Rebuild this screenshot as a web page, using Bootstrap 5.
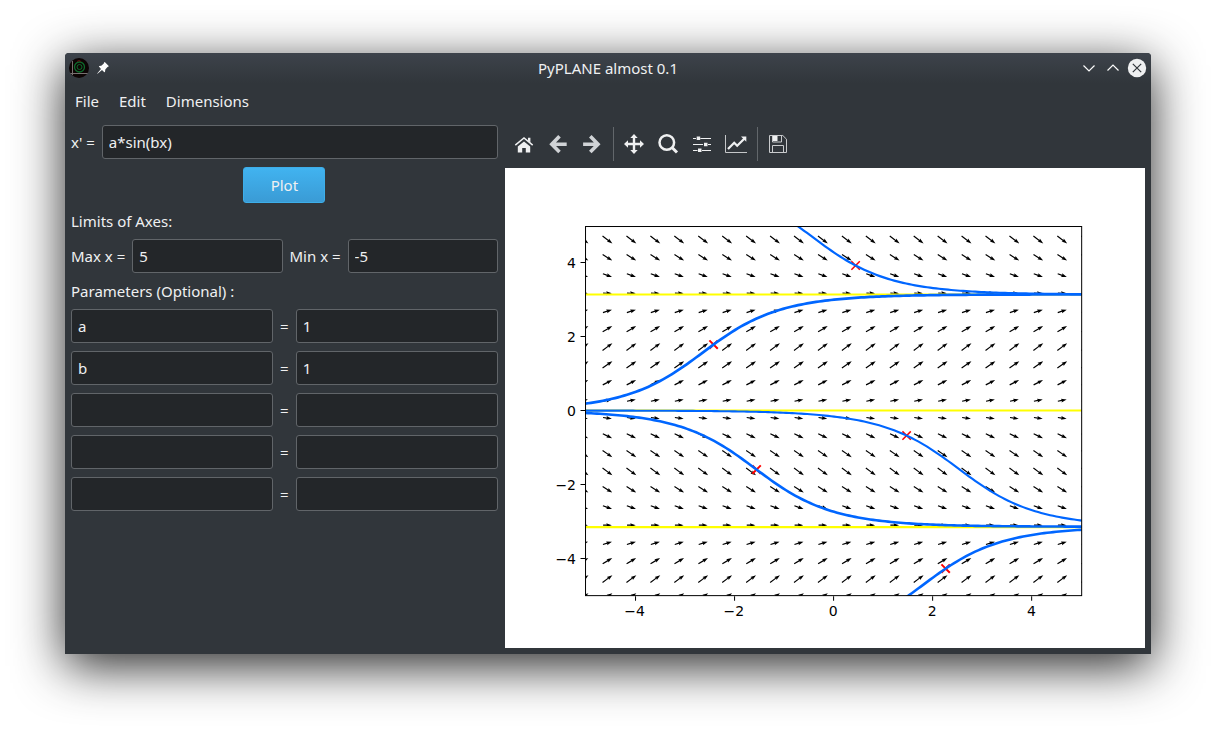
<!DOCTYPE html>
<html lang="en">
<head>
<meta charset="utf-8">
<meta name="viewport" content="width=device-width, initial-scale=1">
<title>PyPLANE almost 0.1</title>
<link rel="stylesheet" href="https://cdn.jsdelivr.net/npm/bootstrap@5.3.0/dist/css/bootstrap.min.css">
<style>
  :root { --win: #31363b; --field: #232629; --edge: #616569; --ink: #eff0f1; }
  body { background: #fff; color: var(--ink); font: 15px/20px "Noto Sans", sans-serif; }
  .desktop { padding: 53px 65px 77px; }
  .app-window { background: var(--win); border-radius: 4px 4px 0 0; box-shadow: 0 12px 50px rgba(0,0,0,.85); }
  .title-bar { display: grid; grid-template-columns: 1fr auto 1fr; align-items: center; height: 30px; padding: 0 4px;
    background: linear-gradient(#3d434b, var(--win)); border-radius: 4px 4px 0 0; }
  .title-bar h1 { font-size: 15px; line-height: 20px; font-weight: 400; }
  .plain-btn { border: 0; padding: 0; background: none; color: inherit; display: flex; align-items: center; justify-content: center; }
  .win-btn { width: 20px; height: 20px; }
  .menu-bar { height: 36px; }
  .menu-bar a { color: inherit; text-decoration: none; padding: 0 10px; }
  .panes { display: grid; grid-template-columns: 2fr 3fr; gap: 7px; padding: 6px; }
  .panes .form-control { height: 34px; padding: 0 6px; border-radius: 3px; min-width: 0; flex: 1 1 0;
    background: var(--field); border-color: var(--edge); color: var(--ink); font-size: 15px; line-height: 20px; }
  .tight { gap: 8px 7px; }
  .section-label { height: 20px; }
  .plot-btn { width: 82px; height: 36px; padding: 0; border-radius: 3px; color: var(--ink); font-size: 15px; line-height: 20px;
    border: 1px solid #3daee9; background: linear-gradient(#41b3f0, #3a9bd5); }
  .tools { height: 37px; padding-left: 2px; margin-bottom: 6px; }
  .tool-btn { width: 34px; height: 34px; }
  .tool-rule { width: 1px; height: 34px; margin: 0 3px 0 4px; background: #62676b; }
  .figure-canvas { display: block; width: 100%; height: auto; background: #fff; }
  .figure-canvas text { font: 14px "DejaVu Sans", sans-serif; fill: #000; }
</style>
</head>
<body>
<main class="desktop">
  <div class="app-window">
    <header class="title-bar">
      <div class="d-flex align-items-center gap-1">
        <svg width="20" height="20" viewBox="0 0 20 20" fill="none" aria-hidden="true">
          <circle cx="10" cy="10" r="10" fill="#0d0404"/>
          <path d="M3.500 3v14M1.500 15.500h17" stroke="#77706f"/>
          <circle cx="10.500" cy="9" r="5" stroke="#0d6a2b" stroke-width="1.300"/>
          <circle cx="10.500" cy="9" r="2.500" stroke="#0d6a2b"/>
          <path d="M8 3.500 10 2.500l2 1" stroke="#5c1515"/>
        </svg>
        <button type="button" class="plain-btn win-btn" aria-label="Keep above">
          <svg width="14" height="14" viewBox="0 0 14 14" fill="#fcfcfc"><path d="M8.300 1 9 1.200 12.500 4.800 12.700 5.600 11.500 6 9.300 8.600 9 11 8.300 11.200 6 8.900 1.500 12.700 1.200 12.400 5 7.900 2.900 5.600 3.100 5 5.300 4.700 7.800 2.400z"/></svg>
        </button>
      </div>
      <h1 class="m-0">PyPLANE almost 0.1</h1>
      <div class="d-flex justify-content-end gap-1">
        <button type="button" class="plain-btn win-btn" aria-label="Minimize"><svg width="20" height="20" fill="none" stroke="#fcfcfc" stroke-width="1.200"><path d="m4.500 7.500 5.500 5.500 5.500-5.500"/></svg></button>
        <button type="button" class="plain-btn win-btn" aria-label="Maximize"><svg width="20" height="20" fill="none" stroke="#fcfcfc" stroke-width="1.200"><path d="m4.500 12.500 5.500-5.500 5.500 5.500"/></svg></button>
        <button type="button" class="plain-btn win-btn" aria-label="Close"><svg width="20" height="20" fill="none"><circle cx="10" cy="10" r="9.200" fill="#eff0f1"/><path d="m5.800 5.800 8.400 8.400m0-8.400-8.400 8.400" stroke="#31363b" stroke-width="1.200"/></svg></button>
      </div>
    </header>
    <nav class="menu-bar d-flex align-items-center" aria-label="Menu">
      <a href="#">File</a><a href="#">Edit</a><a href="#">Dimensions</a>
    </nav>
    <div class="panes">
      <form class="d-flex flex-column tight">
        <div class="d-flex align-items-center tight">
          <label for="eq">x' =</label><input class="form-control" id="eq" value="a*sin(bx)">
        </div>
        <button type="button" class="btn plot-btn align-self-center">Plot</button>
        <div class="section-label">Limits of Axes:</div>
        <div class="d-flex align-items-center tight">
          <label for="xmax">Max x =</label><input class="form-control" id="xmax" value="5">
          <label for="xmin">Min x =</label><input class="form-control" id="xmin" value="-5">
        </div>
        <div class="section-label">Parameters (Optional) :</div>
        <div class="d-flex align-items-center tight"><input class="form-control" aria-label="Parameter 1 name" value="a"><label for="v1">=</label><input class="form-control" id="v1" value="1"></div>
        <div class="d-flex align-items-center tight"><input class="form-control" aria-label="Parameter 2 name" value="b"><label for="v2">=</label><input class="form-control" id="v2" value="1"></div>
        <div class="d-flex align-items-center tight"><input class="form-control" aria-label="Parameter 3 name"><label for="v3">=</label><input class="form-control" id="v3"></div>
        <div class="d-flex align-items-center tight"><input class="form-control" aria-label="Parameter 4 name"><label for="v4">=</label><input class="form-control" id="v4"></div>
        <div class="d-flex align-items-center tight"><input class="form-control" aria-label="Parameter 5 name"><label for="v5">=</label><input class="form-control" id="v5"></div>
      </form>
      <section aria-label="Plot">
        <div class="tools d-flex align-items-center" role="toolbar">
          <button type="button" class="plain-btn tool-btn" aria-label="Home"><svg width="24" height="24" fill="#eff0f1"><path d="M12 9.500 18.200 14.500V20.500H13.800V16H10.200V20.500H5.800V14.500z"/><path d="M16 5.800h2.400v5l-2.400-2z"/><path d="M3.300 13.200 12 6l8.700 7.200" fill="none" stroke="#eff0f1" stroke-width="1.500"/></svg></button>
          <button type="button" class="plain-btn tool-btn" aria-label="Back"><svg width="24" height="24" fill="none" stroke="#d0d3d6" stroke-width="3.600"><path d="M20.700 12.200H6.500M13.500 4.300 5.800 12.200l7.700 7.700"/></svg></button>
          <button type="button" class="plain-btn tool-btn" aria-label="Forward"><svg width="24" height="24" fill="none" stroke="#d0d3d6" stroke-width="3.600"><path d="M3.100 12.200H17.500M10.300 4.300l7.700 7.900-7.700 7.700"/></svg></button>
          <span class="tool-rule"></span>
          <button type="button" class="plain-btn tool-btn" aria-label="Pan"><svg width="24" height="24" fill="#eff0f1"><path d="M12 2l3.700 4h-2.500v4.800H18V8.300L22 12l-4 3.700v-2.500h-4.800V18h2.500L12 22l-3.700-4h2.500v-4.800H6v2.500L2 12l4-3.700v2.500h4.800V6H8.300z"/></svg></button>
          <button type="button" class="plain-btn tool-btn" aria-label="Zoom"><svg width="24" height="24" fill="none" stroke="#eff0f1"><circle cx="10.800" cy="10.500" r="7.300" stroke-width="2.500"/><path d="m16 15.500 5 5" stroke-width="3"/></svg></button>
          <button type="button" class="plain-btn tool-btn" aria-label="Subplots"><svg width="24" height="24" fill="#eff0f1"><path d="M3 6h3v1H3zM10.500 6H21v1H10.500zM3 12h10v1H3zM18 12h3v1h-3zM3 18h4.500v1H3zM12 18h9v1h-9zM6.700 4.500h3.500V8H6.700zM14 10.700h3.500v3.500H14zM8 16.500h3.500V20H8z"/></svg></button>
          <button type="button" class="plain-btn tool-btn" aria-label="Edit axes"><svg width="24" height="24" fill="none" stroke="#eff0f1"><path d="M1.500 3v17.500H23" stroke="#c5c7c9"/><path d="m4 17 6.200-6.200 3 3L20.500 6.500" stroke-width="2.200"/><path d="M17 4.500h5.300v5.300z" fill="#eff0f1" stroke="none"/></svg></button>
          <span class="tool-rule"></span>
          <button type="button" class="plain-btn tool-btn" aria-label="Save"><svg width="24" height="24" fill="none" stroke="#c9cbcd"><path d="M3.500 3.500h13.300l3.700 3.700v13.300h-17zM6.500 20v-6.500h11V20"/><path d="M6.500 4v6h9V4"/><path d="M7 4h4.500v5H7z" fill="#eff0f1" stroke="none"/></svg></button>
        </div>
        <svg class="figure-canvas" viewBox="0 0 640 480" role="img" aria-label="Phase plot of x' = a*sin(bx)">
          <clipPath id="axes-clip"><rect x="80.500" y="58.500" width="496" height="369"/></clipPath>
          <g clip-path="url(#axes-clip)">
            <path id="arrows" fill="#000"/>
            <path d="M80 126.500h497M80 242.500h497M80 359h497" stroke="#ff0" stroke-width="2.100"/>
            <g id="markers" fill="none" stroke="#f00"></g>
            <g id="curves" fill="none" stroke="#06f"></g>
          </g>
          <rect x="80.500" y="58.500" width="496" height="369" fill="none" stroke="#000"/>
          <g id="ticks" stroke="#000"></g>
          <g id="tick-labels"></g>
        </svg>
      </section>
    </div>
  </div>
</main>
<script src="https://cdn.jsdelivr.net/npm/bootstrap@5.3.0/dist/js/bootstrap.bundle.min.js"></script>
<script>
  const T = 49.6, X = 36.96, CX = 328, CY = 242.5;
  const byId = id => document.getElementById(id);

  // Direction field of (1, sin x), arrows centred on their grid points
  let field = "";
  for (let r = -1; r <= 20; r++) for (let c = 0; c < 22; c++) {
    const px = 78.5 + c * 23.93, py = 71.7 + r * 17.84;
    const s = Math.sin((CY - py) / X), len = 8.7 * Math.hypot(1, s);
    const a = Math.atan2(-s * X, T), h = len / 2;
    const pts = [[-h, -.6], [h - 5, -.6], [h - 5.6, -1.9], [h, 0], [h - 5.6, 1.9], [h - 5, .6], [-h, .6]];
    field += "M" + pts.map(([u, v]) =>
      (px + u * Math.cos(a) - v * Math.sin(a)).toFixed(2) + " " + (py + u * Math.sin(a) + v * Math.cos(a)).toFixed(2)).join("L") + "z";
  }
  byId("arrows").setAttribute("d", field);

  // Solutions x(t) = 2 atan(tan(x0/2) e^(t - t0)) through each start point
  const starts = [[350.5, 97.5, 2.2, 1.5], [208.5, 176.5, 2.7, 2], [401.5, 267.5, 2.1, 1.5], [251.5, 301.5, 2.6, 2], [440.5, 400.5, 2.6, 2]];
  let curves = "", marks = "";
  for (const [mx, my, w, mw] of starts) {
    const x0 = (CY - my) / X, k = Math.tan(x0 / 2);
    const turn = Math.abs(x0) > Math.PI ? 2 * Math.PI * Math.sign(x0) : 0;
    const d = [];
    for (let px = 80; px <= 578; px += 3)
      d.push(px + " " + (CY - X * (2 * Math.atan(k * Math.exp((px - mx) / T)) + turn)).toFixed(2));
    curves += `<path stroke-width="${w}" d="M${d.join("L")}"/>`;
    marks += `<path stroke-width="${mw}" d="M${mx - 4.2} ${my - 4.2}l8.400 8.400m0-8.400l-8.400 8.400"/>`;
  }
  byId("curves").innerHTML = curves;
  byId("markers").innerHTML = marks;

  let ticks = "", labels = "";
  for (const v of [-4, -2, 0, 2, 4]) {
    const tx = Math.round(CX + v * T) + .5, ty = Math.round(CY - v * X - .5) + .5, name = String(v).replace("-", "\u2212");
    ticks += `<path d="M${tx} 428v4.500M80 ${ty}h-4.500"/>`;
    labels += `<text x="${CX + v * T}" y="448" text-anchor="middle">${name}</text><text x="71" y="${ty + 5}" text-anchor="end">${name}</text>`;
  }
  byId("ticks").innerHTML = ticks;
  byId("tick-labels").innerHTML = labels;
</script>
</body>
</html>
